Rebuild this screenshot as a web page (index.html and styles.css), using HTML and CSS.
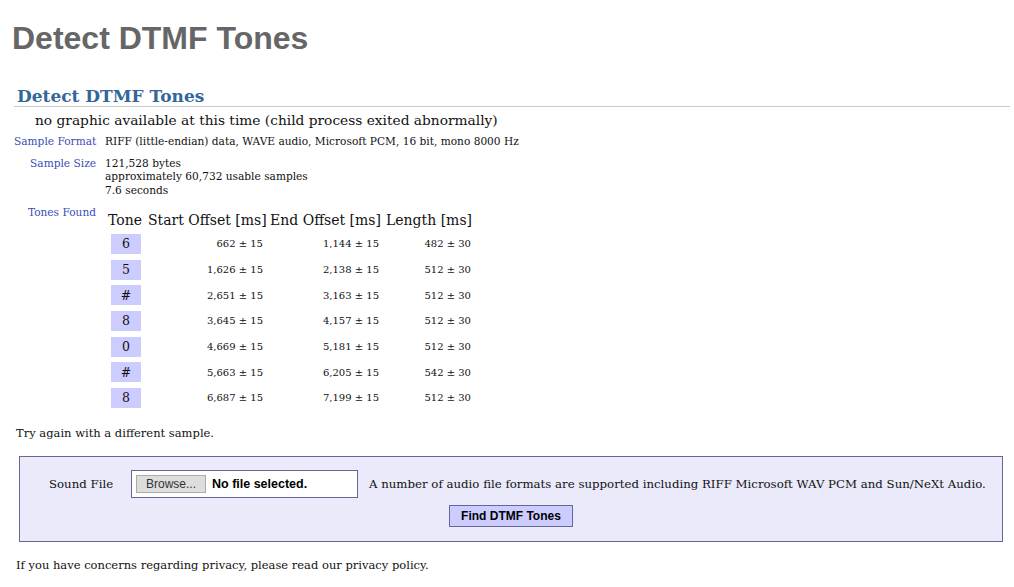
FILE: index.html
```html
<!DOCTYPE html>
<html>
<head>
<meta charset="utf-8">
<title>Detect DTMF Tones</title>
<link rel="stylesheet" href="styles.css">
</head>
<body>
<h1 class="page-title">Detect DTMF Tones</h1>
<div class="content">
  <h2 class="section-title">Detect DTMF Tones</h2>
  <p class="no-graphic">no graphic available at this time (child process exited abnormally)</p>
  <div class="details">
    <div class="label">Sample Format</div>
    <div class="value">RIFF (little-endian) data, WAVE audio, Microsoft PCM, 16 bit, mono 8000 Hz</div>
    <div class="label">Sample Size</div>
    <div class="value">121,528 bytes<br>approximately 60,732 usable samples<br>7.6 seconds</div>
    <div class="label">Tones Found</div>
    <div class="value">
      <div class="tones">
        <div class="th">Tone</div><div class="th">Start Offset [ms]</div><div class="th th-b">End Offset [ms]</div><div class="th th-b">Length [ms]</div>
        <div class="tone"><span>6</span></div><div class="num">662 ± 15</div><div class="num">1,144 ± 15</div><div class="num">482 ± 30</div>
        <div class="tone"><span>5</span></div><div class="num">1,626 ± 15</div><div class="num">2,138 ± 15</div><div class="num">512 ± 30</div>
        <div class="tone"><span>#</span></div><div class="num">2,651 ± 15</div><div class="num">3,163 ± 15</div><div class="num">512 ± 30</div>
        <div class="tone"><span>8</span></div><div class="num">3,645 ± 15</div><div class="num">4,157 ± 15</div><div class="num">512 ± 30</div>
        <div class="tone"><span>0</span></div><div class="num">4,669 ± 15</div><div class="num">5,181 ± 15</div><div class="num">512 ± 30</div>
        <div class="tone"><span>#</span></div><div class="num">5,663 ± 15</div><div class="num">6,205 ± 15</div><div class="num">542 ± 30</div>
        <div class="tone"><span>8</span></div><div class="num">6,687 ± 15</div><div class="num">7,199 ± 15</div><div class="num">512 ± 30</div>
      </div>
    </div>
  </div>
  <p class="try-again">Try again with a different sample.</p>
  <form class="upload">
    <div class="upload-row">
      <span class="upload-label">Sound File</span>
      <span class="file-input"><span class="browse">Browse...</span><span class="file-status">No file selected.</span></span>
      <span class="upload-note">A number of audio file formats are supported including RIFF Microsoft WAV PCM and Sun/NeXt Audio.</span>
    </div>
    <div class="submit-row"><button type="button" class="submit">Find DTMF Tones</button></div>
  </form>
  <p class="privacy">If you have concerns regarding privacy, please read our privacy policy.</p>
</div>
</body>
</html>
```
FILE: styles.css
```css
html, body {
  margin: 0;
  padding: 0;
  background: #fff;
}
body {
  font-family: "DejaVu Serif", Georgia, serif;
  color: #111;
}
.page-title {
  font-family: "Liberation Sans", Arial, sans-serif;
  font-weight: bold;
  font-size: 32px;
  line-height: 37px;
  color: #666;
  margin: 0;
  padding: 20px 0 0 12px;
}
.content {
  padding: 0 4px 0 14px;
}
.section-title {
  margin: 29px 0 0 0;
  padding: 0 0 0 3px;
  font-size: 17px;
  line-height: 20px;
  color: #336699;
  border-bottom: 1px solid #c8c8c8;
}
.no-graphic {
  margin: 4px 0 0 21px;
  font-size: 13.75px;
  line-height: 18px;
}
.details {
  display: grid;
  grid-template-columns: 82px 1fr;
  column-gap: 9px;
  row-gap: 8.5px;
  margin-top: 5.5px;
  font-size: 10.6px;
  line-height: 13.5px;
}
.label {
  text-align: right;
  white-space: nowrap;
  color: #3a4db5;
}
.tones {
  display: grid;
  grid-template-columns: 40px 120px 116px 92px;
  grid-template-rows: 18px;
  grid-auto-rows: 20px;
  row-gap: 5.67px;
  margin: 5px 0 0 1px;
  align-items: center;
}
.th {
  font-size: 14px;
  line-height: 18px;
  white-space: nowrap;
  padding-left: 2px;
}
.th-b {
  padding-left: 4px;
}
.tone span {
  display: flex;
  align-items: center;
  justify-content: center;
  width: 30px;
  height: 20px;
  margin-left: 5px;
  background: #ccccff;
  font-size: 12.5px;
}
.num {
  text-align: right;
  white-space: nowrap;
  font-size: 10px;
  padding-right: 3px;
}
.try-again {
  margin: 18px 0 0 2px;
  font-size: 11.5px;
  line-height: 15px;
}
.upload {
  margin: 15px 0 0 5px;
  width: 982px;
  height: 84px;
  border: 1px solid #666699;
  background: #eaeafa;
  box-sizing: content-box;
}
.upload-row {
  display: flex;
  align-items: center;
  padding: 13px 0 0 29px;
  font-size: 11.75px;
}
.upload-label {
  width: 82px;
  flex-shrink: 0;
}
.file-input {
  display: flex;
  align-items: center;
  flex-shrink: 0;
  width: 221px;
  height: 26px;
  border: 1px solid #666699;
  background: #fff;
  padding-left: 4px;
  font-family: "Liberation Sans", Arial, sans-serif;
  font-size: 12px;
  box-sizing: content-box;
}
.browse {
  display: inline-block;
  width: 68px;
  height: 16px;
  line-height: 16px;
  border: 1px solid #aaa;
  background: #ddd;
  color: #333;
  text-align: center;
}
.file-status {
  font-weight: bold;
  font-size: 12.5px;
  margin-left: 6px;
  color: #000;
}
.upload-note {
  margin-left: 11px;
  white-space: nowrap;
}
.submit-row {
  display: flex;
  justify-content: center;
  margin-top: 7px;
}
.submit {
  width: 124px;
  height: 22px;
  padding: 0;
  border: 1px solid #666699;
  background: #ccccff;
  font-family: "Liberation Sans", Arial, sans-serif;
  font-weight: bold;
  font-size: 12px;
  color: #000;
}
.privacy {
  margin: 16px 0 0 2px;
  font-size: 11.5px;
  line-height: 15px;
}
```
